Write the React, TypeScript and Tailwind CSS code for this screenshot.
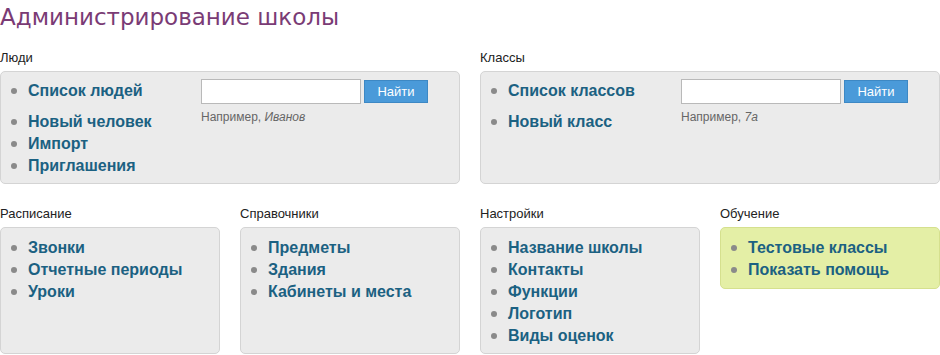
import React from "react";

const linkCls = "text-[16px] font-bold text-[#1b6182] leading-[22px]";

function Item({ children, first }: { children: React.ReactNode; first?: boolean }) {
  return (
    <li className={`flex items-center ${first ? "mb-[9px]" : ""}`}>
      <span className="w-[6px] h-[6px] rounded-full bg-[#8a8a8a] ml-[10px] mr-[11px] shrink-0" />
      <span className={linkCls}>{children}</span>
    </li>
  );
}

function Search({ hint, hintItalic }: { hint: string; hintItalic: string }) {
  return (
    <div className="flex flex-col">
      <div className="flex items-center gap-[3px]">
        <div className="w-[160px] h-[25px] bg-white border border-[#b9b9b9]" />
        <div className="w-[64px] h-[23px] bg-[#4a9ad9] text-white text-[13px] flex items-center justify-center border border-[#3d88c4]">
          Найти
        </div>
      </div>
      <div className="text-[12px] text-[#666] mt-[4px]">
        {hint}
        <i>{hintItalic}</i>
      </div>
    </div>
  );
}

function Section({
  title,
  children,
  className = "",
  boxClass = "bg-[#ebebeb] border-[#d4d4d4]",
}: {
  title: string;
  children: React.ReactNode;
  className?: string;
  boxClass?: string;
}) {
  return (
    <div className={`flex flex-col ${className}`}>
      <div className="text-[13px] text-[#222] h-[19px] leading-[19px] mb-[4px]">{title}</div>
      <div className={`border rounded-[5px] ${boxClass} flex-1`}>{children}</div>
    </div>
  );
}

export default function App() {
  return (
    <div
      className="w-[940px] h-[355px] overflow-hidden bg-white"
      style={{ fontFamily: '"Liberation Sans", Arial, sans-serif' }}
    >
      <h1
        className="text-[23px] text-[#7a3b75] leading-[30px] pt-[2px]"
        style={{ fontFamily: '"DejaVu Sans", Verdana, sans-serif' }}
      >
        Администрирование школы
      </h1>
      <div className="grid grid-cols-2 gap-x-[20px] mt-[16px]">
        <Section title="Люди" className="h-[136px]">
          <div className="flex pt-[7px]">
            <ul className="w-[200px] pt-[1px]">
              <Item first>Список людей</Item>
              <Item>Новый человек</Item>
              <Item>Импорт</Item>
              <Item>Приглашения</Item>
            </ul>
            <Search hint="Например, " hintItalic="Иванов" />
          </div>
        </Section>
        <Section title="Классы" className="h-[136px]">
          <div className="flex pt-[7px]">
            <ul className="w-[200px] pt-[1px]">
              <Item first>Список классов</Item>
              <Item>Новый класс</Item>
            </ul>
            <Search hint="Например, " hintItalic="7а" />
          </div>
        </Section>
      </div>
      <div className="grid grid-cols-4 gap-x-[20px] mt-[20px] items-start">
        <Section title="Расписание" className="h-[150px]">
          <ul className="pt-[9px]">
            <Item>Звонки</Item>
            <Item>Отчетные периоды</Item>
            <Item>Уроки</Item>
          </ul>
        </Section>
        <Section title="Справочники" className="h-[150px]">
          <ul className="pt-[9px]">
            <Item>Предметы</Item>
            <Item>Здания</Item>
            <Item>Кабинеты и места</Item>
          </ul>
        </Section>
        <Section title="Настройки" className="h-[150px]">
          <ul className="pt-[9px]">
            <Item>Название школы</Item>
            <Item>Контакты</Item>
            <Item>Функции</Item>
            <Item>Логотип</Item>
            <Item>Виды оценок</Item>
          </ul>
        </Section>
        <Section title="Обучение" boxClass="bg-[#e4efa6] border-[#d5e08e]">
          <ul className="pt-[9px] pb-[7px]">
            <Item>Тестовые классы</Item>
            <Item>Показать помощь</Item>
          </ul>
        </Section>
      </div>
    </div>
  );
}
